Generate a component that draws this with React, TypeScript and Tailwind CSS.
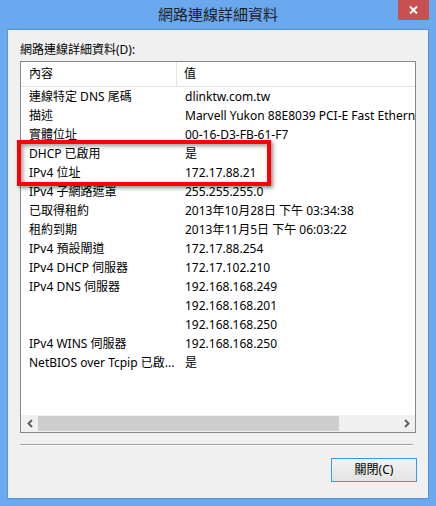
const FONT = { fontFamily: '"Noto Sans", "Noto Sans CJK TC", sans-serif' };

type Row = { name: string; value: string };

const rows: Row[] = [
  { name: '連線特定 DNS 尾碼', value: 'dlinktw.com.tw' },
  { name: '描述', value: 'Marvell Yukon 88E8039 PCI-E Fast Ethernet Controller' },
  { name: '實體位址', value: '00-16-D3-FB-61-F7' },
  { name: 'DHCP 已啟用', value: '是' },
  { name: 'IPv4 位址', value: '172.17.88.21' },
  { name: 'IPv4 子網路遮罩', value: '255.255.255.0' },
  { name: '已取得租約', value: '2013年10月28日 下午 03:34:38' },
  { name: '租約到期', value: '2013年11月5日 下午 06:03:22' },
  { name: 'IPv4 預設閘道', value: '172.17.88.254' },
  { name: 'IPv4 DHCP 伺服器', value: '172.17.102.210' },
  { name: 'IPv4 DNS 伺服器', value: '192.168.168.249' },
  { name: '', value: '192.168.168.201' },
  { name: '', value: '192.168.168.250' },
  { name: 'IPv4 WINS 伺服器', value: '192.168.168.250' },
  { name: 'NetBIOS over Tcpip 已啟...', value: '是' },
];

function Chevron({ dir }: { dir: 'left' | 'right' }) {
  return (
    <svg width="8" height="9" viewBox="0 0 8 9">
      <path
        d={dir === 'left' ? 'M6 1 L2.5 4.5 L6 8' : 'M2 1 L5.5 4.5 L2 8'}
        fill="none"
        stroke="#606060"
        strokeWidth="2"
      />
    </svg>
  );
}

export default function App() {
  return (
    <div className="relative flex h-[506px] w-[436px] flex-col bg-[#6aa8f0] text-[12px] text-black" style={FONT}>
      {/* title bar */}
      <div className="flex h-[29px] shrink-0 items-center justify-center pb-[1px] text-[15px] text-[#1e1e1e]">
        網路連線詳細資料
      </div>
      <div className="absolute right-[7px] top-0 flex h-[20px] w-[31px] items-center justify-center bg-[#c75050]">
        <svg width="9" height="8" viewBox="0 0 9 8">
          <path d="M1 0.5 L8 7.5 M8 0.5 L1 7.5" stroke="#fff" strokeWidth="2" />
        </svg>
      </div>

      {/* client area */}
      <div className="mx-[7px] flex h-[470px] flex-col border border-[#5a92d6] bg-[#f0f0f0] px-[12px]">
        <div className="mb-[3px] pt-[12px] leading-[16px]">網路連線詳細資料(D):</div>

        <div className="flex h-[372px] w-[396px] flex-col overflow-hidden border border-[#828790] bg-white">
          <div className="flex h-[25px] shrink-0 border-b border-[#e5e5e5]">
            <div className="flex w-[156px] items-center border-r border-[#e5e5e5] pl-[8px]">內容</div>
            <div className="flex items-center pl-[7px]">值</div>
          </div>
          <div className="flex-1">
            {rows.map((r, i) => (
              <div key={i} className="flex h-[19px] items-center whitespace-nowrap">
                <div className="w-[157px] shrink-0 pl-[8px]">{r.name}</div>
                <div className="pl-[7px]">{r.value}</div>
              </div>
            ))}
          </div>
          {/* horizontal scrollbar */}
          <div className="flex h-[17px] shrink-0 bg-[#f0f0f0]">
            <div className="flex w-[17px] items-center justify-center">
              <Chevron dir="left" />
            </div>
            <div className="my-[1px] w-[301px] bg-[#cdcdcd]" />
            <div className="flex-1" />
            <div className="flex w-[17px] items-center justify-center">
              <Chevron dir="right" />
            </div>
          </div>
        </div>

        <div className="mt-[11px] h-[2px] w-[393px] border-t border-b border-t-[#a0a0a0] border-b-white" />

        <div className="mt-[12px] flex justify-end pr-[-1px]">
          <button className="-mr-[1px] flex h-[24px] w-[86px] items-center justify-center border border-[#3399ff] bg-gradient-to-b from-[#f2f2f2] to-[#e3e3e3] text-[12px]">
            關閉(C)
          </button>
        </div>
      </div>

      {/* red highlight */}
      <div className="pointer-events-none absolute left-[17px] top-[140px] h-[46px] w-[254px] border-[4px] border-[#ff0000] shadow-[2px_2px_4px_rgba(0,0,0,0.45),inset_2px_2px_4px_rgba(0,0,0,0.4)]" />
    </div>
  );
}
